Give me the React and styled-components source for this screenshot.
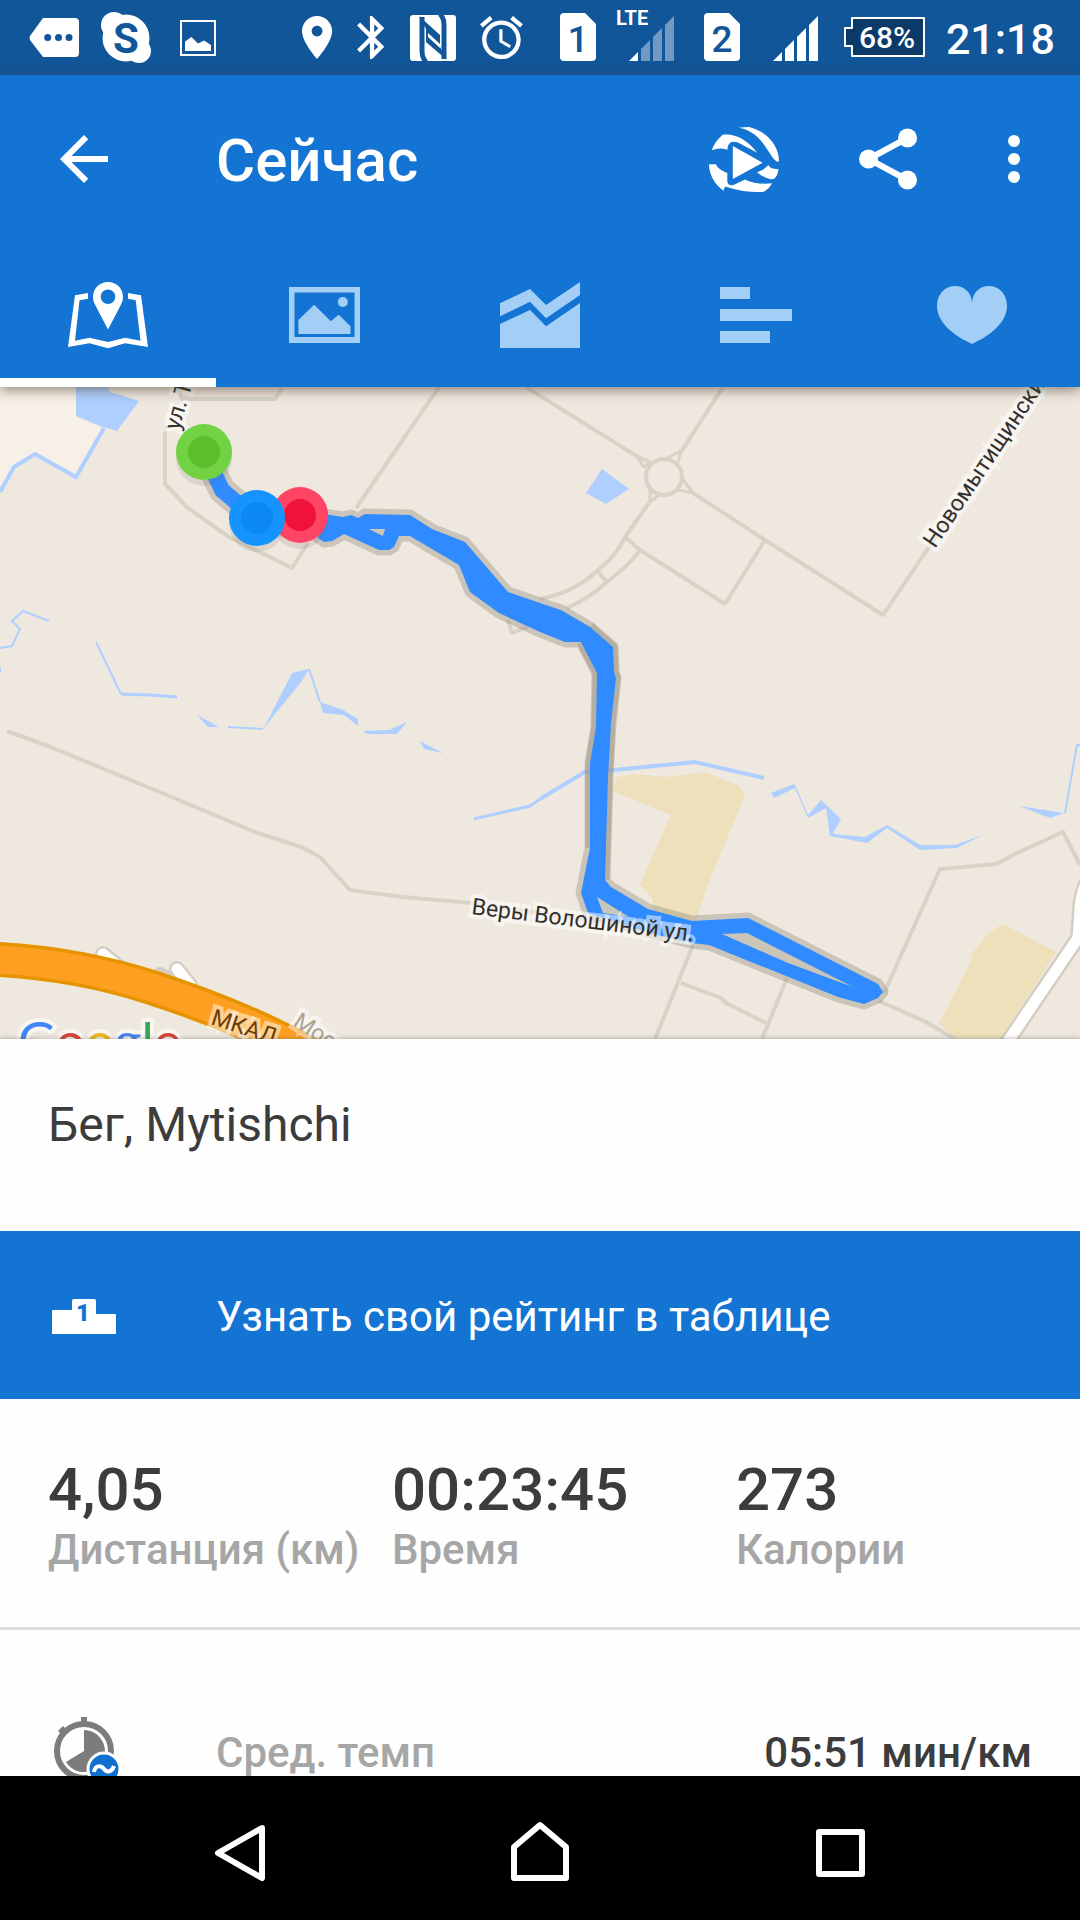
import { useState } from "react";
import styled, { createGlobalStyle } from "styled-components";

const GlobalStyle = createGlobalStyle`
  * {
    box-sizing: border-box;
  }

  body {
    margin: 0;
    background: #fefefe;
    font-family: Roboto, "Noto Sans", sans-serif;
  }

  button {
    border: none;
    padding: 0;
    background: none;
    color: inherit;
    font: inherit;
    cursor: pointer;
  }

  svg {
    display: block;
    flex-shrink: 0;
  }
`;

const Screen = styled.div`
  display: flex;
  flex-direction: column;
  height: 100vh;
`;

const StatusBar = styled.div`
  display: flex;
  align-items: center;
  justify-content: space-between;
  height: 75px;
  flex-shrink: 0;
  padding: 0 25px 0 29px;
  background: #12569a;
  color: #fff;
`;

const StatusGroup = styled.div`
  display: flex;
  align-items: center;
  gap: ${(props) => props.$gap}px;
`;

const Clock = styled.span`
  padding-top: 2px;
  font-size: 43px;
  line-height: 50px;
  font-weight: 500;
`;

const Header = styled.header`
  position: relative;
  z-index: 1;
  flex-shrink: 0;
  background: #1374d3;
  color: #fff;
  box-shadow: 0 3px 12px rgba(70, 60, 45, 0.6);
`;

const Toolbar = styled.div`
  display: flex;
  align-items: center;
  height: 168px;
  padding: 0 12px 0 0;
`;

const BackButton = styled.button`
  display: flex;
  align-items: center;
  width: 216px;
  height: 168px;
  padding-left: 48px;
`;

const Title = styled.h1`
  flex: 1;
  margin: 0;
  padding-top: 4px;
  font-size: 60px;
  line-height: 70px;
  font-weight: 500;
`;

const ActionButton = styled.button`
  display: flex;
  align-items: center;
  justify-content: center;
  width: ${(props) => (props.$narrow ? 108 : 144)}px;
  height: 144px;
`;

const Tabs = styled.nav`
  display: flex;
  height: 144px;
`;

const Tab = styled.button`
  display: flex;
  flex: 1;
  align-items: center;
  justify-content: center;
  color: ${(props) => (props.$active ? "#fff" : "#a3cff6")};
  box-shadow: ${(props) => (props.$active ? "inset 0 -9px 0 #fff" : "none")};
`;

const Content = styled.main`
  flex: 1;
  min-height: 0;
  overflow: hidden;
`;

const MapCanvas = styled.svg`
  width: 100%;
  height: 652px;
  background: #efe8df;
`;

const ActivityName = styled.h2`
  position: relative;
  margin: 0;
  padding: 58px 48px 78px;
  background: #fefefe;
  box-shadow: 0 0 5px rgba(90, 80, 60, 0.5);
  color: #3c3c3c;
  font-size: 48px;
  line-height: 56px;
  font-weight: 400;
`;

const RankingButton = styled.button`
  position: relative;
  display: flex;
  align-items: center;
  gap: 96px;
  width: 100%;
  height: 168px;
  padding: 2px 48px 0;
  background: #1374d3;
  color: #fff;
  font-size: 42px;
  line-height: 49px;
`;

const Stats = styled.section`
  display: grid;
  grid-template-columns: repeat(3, 1fr);
  padding: 56px 0 53px 48px;
  border-bottom: 3px solid #dedede;
`;

const StatValue = styled.div`
  color: #3c3c3c;
  font-size: 60px;
  line-height: 70px;
  font-weight: 500;
`;

const StatLabel = styled.div`
  color: #a6a6a6;
  font-size: 42px;
  line-height: 49px;
  font-weight: 500;
  white-space: nowrap;
`;

const DetailList = styled.section`
  padding-top: 48px;
`;

const DetailRow = styled.div`
  display: flex;
  align-items: center;
  gap: 96px;
  height: 148px;
  padding: 0 48px;
  font-size: 42px;
  line-height: 49px;
  font-weight: 500;
`;

const DetailLabel = styled.span`
  flex: 1;
  color: #a6a6a6;
`;

const DetailValue = styled.span`
  color: #3c3c3c;
`;

const NavBar = styled.footer`
  position: relative;
  display: flex;
  height: 144px;
  flex-shrink: 0;
  padding: 0 90px;
  background: #000;
  color: #fff;
`;

const NavButton = styled.button`
  display: flex;
  flex: 1;
  align-items: center;
  justify-content: center;
`;

/* Status bar icons */

const MoreNotificationsIcon = () => (
  <svg width="50" height="75" viewBox="0 0 50 75">
    <path
      d="M14 18H46Q50 18 50 22V53Q50 57 46 57H14L1 40Q0 38 1 36Z"
      fill="#fff"
    />
    <g fill="#12569a">
      <circle cx="18.7" cy="37.5" r="3.5" />
      <circle cx="29.5" cy="37.5" r="3.5" />
      <circle cx="40" cy="37.5" r="3.5" />
    </g>
  </svg>
);

const SkypeIcon = () => (
  <svg width="50" height="75" viewBox="0 0 50 75">
    <g fill="#fff">
      <circle cx="25" cy="38" r="23.5" />
      <circle cx="13" cy="25" r="13" />
      <circle cx="38" cy="51" r="12" />
    </g>
    <text
      x="25"
      y="53"
      textAnchor="middle"
      fontSize="42"
      fontWeight="700"
      fill="#12569a"
    >
      S
    </text>
  </svg>
);

const PictureIcon = () => (
  <svg width="50" height="75" viewBox="0 0 50 75">
    <rect
      x="8"
      y="21"
      width="34"
      height="34"
      fill="none"
      stroke="#fff"
      strokeWidth="2"
    />
    <path d="M12 51V41.5L18.5 37L25 43.5L31 40.5L38 45V51Z" fill="#fff" />
  </svg>
);

const LocationIcon = () => (
  <svg width="34" height="43" viewBox="5 2 15.8 20">
    <path
      fill="#fff"
      d="M12 2C8.13 2 5 5.13 5 9c0 5.25 7 13 7 13s7-7.75 7-13c0-3.87-3.13-7-7-7zm0 9.5c-1.38 0-2.5-1.12-2.5-2.5s1.12-2.5 2.5-2.5 2.5 1.12 2.5 2.5-1.12 2.5-2.5 2.5z"
    />
  </svg>
);

const BluetoothIcon = () => (
  <svg width="30" height="43" viewBox="4.5 2 14 20">
    <path
      fill="#fff"
      d="M17.71 7.71L12 2h-1v7.59L6.41 5 5 6.41 10.59 12 5 17.59 6.41 19 11 14.41V22h1l5.71-5.71-4.3-4.29 4.3-4.29zM13 5.83l1.88 1.88L13 9.59V5.83zm1.88 10.46L13 18.17v-3.76l1.88 1.88z"
    />
  </svg>
);

const NfcIcon = () => (
  <svg width="54" height="46" viewBox="-4 0 54 46">
    <rect width="46" height="46" rx="3" fill="#fff" />
    <g fill="none" stroke="#12569a" strokeWidth="5">
      <path d="M12 2V36Q12 43 16 47" />
      <path d="M34 44V10Q34 3 30 -1" />
    </g>
    <path d="M9 1L30 20V32L37 45L16 27V14Z" fill="#12569a" />
    <path d="M18 18L30 29V33L18 22Z" fill="#fff" />
  </svg>
);

const AlarmIcon = () => (
  <svg width="60" height="43" viewBox="2 1.9 28 20">
    <path
      fill="#fff"
      d="M22 5.72l-4.6-3.86-1.29 1.53 4.6 3.86L22 5.72zM7.88 3.39L6.6 1.86 2 5.71l1.29 1.53 4.59-3.85zM12.5 8H11v6l4.75 2.85.75-1.23-4-2.37V8zM12 4c-4.97 0-9 4.03-9 9s4.02 9 9 9 9-4.03 9-9-4.03-9-9-9zm0 16c-3.87 0-7-3.13-7-7s3.13-7 7-7 7 3.13 7 7-3.13 7-7 7z"
    />
  </svg>
);

const SimIcon = ({ slot }) => (
  <svg width="36" height="75" viewBox="0 0 36 75">
    <path
      d="M4 13H25L36 24V57Q36 61 32 61H4Q0 61 0 57V17Q0 13 4 13Z"
      fill="#fff"
    />
    <text
      x="18"
      y="52"
      textAnchor="middle"
      fontSize="37"
      fontWeight="500"
      fill="#12569a"
    >
      {slot}
    </text>
  </svg>
);

const SignalIcon = ({ label, weak }) => (
  <svg width={weak ? 68 : 64} height="75" viewBox={`0 0 ${weak ? 68 : 64} 75`}>
    {label && (
      <text x="0" y="25" fontSize="20" fontWeight="700" fill="#fff">
        {label}
      </text>
    )}
    <g transform="translate(13 16)" fill="#fff">
      <path d="M0 45L9 36V45Z" />
      <g opacity={weak ? 0.4 : 1}>
        <path d="M12 45V33L21 24V45Z" />
        <path d="M24 45V21L33 12V45Z" />
        <path d="M36 45V9L45 0V45Z" />
      </g>
    </g>
  </svg>
);

const BatteryIcon = ({ level }) => (
  <svg width="82" height="75" viewBox="0 0 82 75">
    <path
      d="M8 18H80V56H8V46H1V28H8Z"
      fill="#0b3a69"
      stroke="#fff"
      strokeWidth="2"
      strokeLinejoin="round"
    />
    <text
      x="43"
      y="48"
      textAnchor="middle"
      fontSize="30"
      fontWeight="500"
      fill="#fff"
    >
      {level}
    </text>
  </svg>
);

/* Toolbar icons */

const BackIcon = () => (
  <svg width="72" height="72" viewBox="0 0 24 24" fill="currentColor">
    <path d="M20 11H7.83l5.59-5.59L12 4l-8 8 8 8 1.41-1.41L7.83 13H20v-2z" />
  </svg>
);

const ReplayGlobeIcon = () => (
  <svg width="70" height="65" viewBox="0 0 70 65" fill="currentColor">
    <path d="M30 .8Q35 0 40 0C57 4 70 18 70 34Q68 36 66 33C59 27 53 5 30 .8Z" />
    <path d="M2.8 23.3Q5 15 13.8 7.7C25 6 38 12 48.2 25.7L29 15.5Q19 12 18.3 22.7Q10 20 2.8 23.3Z" />
    <path d="M23.8 19L53.7 35.7L23.8 52Z" />
    <path d="M0 37.3H7C8 41 13 44 18.3 46V54Q19 60 25 57.7L36 52.5C45 57 55 57 63 56.3Q60 62 55 64.7C40 66 28 63 16 59.5L14.5 63.7C5 57 0 47 0 37.3Z" />
    <path d="M48 45.3L54 42.7L59.5 38Q61 42.5 69.5 42Q69 48 66 51Q64 53 61 52Q55 51 48 45.3Z" />
  </svg>
);

const ShareIcon = () => (
  <svg width="58" height="62" viewBox="0 0 58 62" fill="currentColor">
    <path
      d="M48.5 10L9.5 31L48.5 52"
      fill="none"
      stroke="currentColor"
      strokeWidth="6"
    />
    <circle cx="9.5" cy="31" r="9.5" />
    <circle cx="48.5" cy="10" r="9.5" />
    <circle cx="48.5" cy="52" r="9.5" />
  </svg>
);

const MoreIcon = () => (
  <svg width="72" height="72" viewBox="0 0 24 24" fill="currentColor">
    <circle cx="12" cy="6" r="2" />
    <circle cx="12" cy="12" r="2" />
    <circle cx="12" cy="18" r="2" />
  </svg>
);

/* Tab icons */

const MapTabIcon = () => (
  <svg width="80" height="67" viewBox="0 0 80 67" fill="currentColor">
    <path d="M0 65L7 13.3L20 11V16.7L11.5 18.3L7 58.7L21.5 55.7L40 60L57 55.7L72.5 58.7L67.7 18.3L60 16.7V11L73 13.3L80 65L57 61.3L40 66.3L21.5 61.3Z" />
    <path
      fillRule="evenodd"
      d="M40 0C31.5 0 25 6.5 25 15C25 19 26.5 21.5 28 24.5L40 47.5L52 24.5C53.5 21.5 55 19 55 15C55 6.5 48.5 0 40 0ZM40 7.5A7.2 7.2 0 1 1 40 22A7.2 7.2 0 1 1 40 7.5Z"
    />
  </svg>
);

const PhotoTabIcon = () => (
  <svg width="71" height="56" viewBox="0 0 71 56" fill="currentColor">
    <path fillRule="evenodd" d="M0 0H71V56H0ZM5.5 5.5V50H65.5V5.5Z" />
    <path d="M9.4 47V33L25.2 17.7L41.8 34.3L49.7 27.7L61.5 39.3V47Z" />
    <circle cx="53.8" cy="15" r="5" />
  </svg>
);

const ChartTabIcon = () => (
  <svg width="80" height="66" viewBox="0 0 80 66" fill="currentColor">
    <path d="M0 21.3L30 7L46 23L80 0V13L46 36.3L30 19.7L0 34.3Z" />
    <path d="M0 42L30 28L46 44.3L80 21V66H0Z" />
  </svg>
);

const SplitsTabIcon = () => (
  <svg width="72" height="56" viewBox="0 0 72 56" fill="currentColor">
    <rect width="30" height="12" />
    <rect y="22" width="72" height="12" />
    <rect y="44" width="50" height="12" />
  </svg>
);

const HeartTabIcon = () => (
  <svg width="70" height="58" viewBox="0 0 70 58" fill="currentColor">
    <path d="M35 16C34 6 27 0 18 0C8 0 0 8 0 20C0 38 20 51 35 58C50 51 70 38 70 20C70 8 62 0 52 0C43 0 36 6 35 16Z" />
  </svg>
);

/* Content icons */

const PodiumIcon = () => (
  <svg width="72" height="72" viewBox="0 0 72 72">
    <path
      d="M4 54V31Q4 30 5 30H24V21Q24 19 26 19H46Q48 19 48 21V34H67Q68 34 68 35V54Z"
      fill="#fff"
    />
    <text
      x="35"
      y="41"
      textAnchor="middle"
      fontSize="24"
      fontWeight="900"
      fill="#1374d3"
    >
      1
    </text>
  </svg>
);

const AveragePaceIcon = () => (
  <svg width="72" height="72" viewBox="0 0 72 72">
    <circle
      cx="36"
      cy="35"
      r="27"
      fill="none"
      stroke="#7c7c7c"
      strokeWidth="6"
    />
    <g fill="#7c7c7c">
      <rect x="33" y="1" width="6" height="6" />
      <path d="M10 15L15 10L18 13L13 18Z" />
      <path d="M36 35V14A21 21 0 1 1 18 46Z" />
    </g>
    <circle cx="56" cy="53" r="16" fill="#1170cf" stroke="#fff" strokeWidth="3" />
    <path
      d="M46 56C47 49 53 49 56 53C59 57 64 56 66 50"
      fill="none"
      stroke="#fff"
      strokeWidth="4"
    />
  </svg>
);

/* Track outline with the three gaps where outbound and return paths part */
const trackPath =
  "M324 514L343 517L351 515L358 518L365 514L410 515L432 529L465 542L508 592L540 603L561 610L590 627L613 647L614 672L616 678L611 723L608 777L605 880L611 887L648 909L692 921L748 918L878 984L883 992L878 998L864 1004L838 997L709 945L691 943L650 933L588 913L581 893L590 848V763L596 727L597 673L581 642L565 642L540 632L499 613L470 592L459 565L410 536H399L394 547L389 550H379L344 534L332 541L324 542L318 538Z" +
  "M369 529L385 529L383 536Z" +
  "M597 897L629 917L603 913Z" +
  "M722 934L747 933L853 987L788 963Z";

const markers = [
  { x: 204, y: 452, outer: "#73d144", inner: "#5bbf2a" },
  { x: 300, y: 515, outer: "#ff4565", inner: "#f01238" },
  { x: 257, y: 518, outer: "#1593ff", inner: "#0b88f5" },
];

const RouteMap = () => (
  <MapCanvas
    viewBox="0 387 1080 652"
    preserveAspectRatio="xMidYMid slice"
    role="img"
    aria-label="Карта"
  >
    <path d="M0 387H76V417L102 428L75 477L35 454L14 467L0 492Z" fill="#f7f0e6" />
    <path d="M178 387H282L275 398H182Z" fill="#efe2d8" />

    {/* Fields */}
    <g fill="#ede0bb">
      <path d="M617 777L633 774L666 777L705 772L739 786L745 795L707 887L695 922L654 913L652 898L640 884L671 815L612 791Z" />
      <path d="M1003 924L1056 952L1000 1039H955L939 1023L972 960L971 955L988 933Z" />
    </g>

    {/* Minor roads */}
    <g fill="none" stroke="#d8d2c7" strokeWidth="4" strokeLinejoin="round">
      <path d="M178 387L182 399H275L283 387" />
      <path d="M165 425V484L188 508L229 537L292 568L308 543M356 508L439 387" />
      <path d="M526 387L638 457L650 462M723 387L681 452" />
      <circle cx="664" cy="477" r="18" />
      <path
        d="M636 456L644 467L651 462M667 458L681 451L678 462M681 477L693 493L678 490M650 487V502L659 495"
        strokeWidth="3"
      />
      <path d="M693 493L765 540L883 615L929 547L960 500" />
      <path d="M765 540L725 604L640 550L625 537" />
      <path d="M649 503L625 537Q617 555 597 571Q575 592 540 599" />
      <path d="M640 550Q630 565 607 582Q590 598 567 608M597 571L606 581" />
      <path d="M508 620L512 633L527 627" />
      <path d="M7 731L48 746L155 790L255 832L301 847L320 857L350 890L403 897L472 903L600 922" />
      <path d="M884 993L940 869L996 864L1019 852L1063 832L1080 865" />
      <path d="M879 1001L926 1022L955 1039M693 945L655 1039M787 978L762 1039" />
      <path d="M681 983L721 998L726 1003L766 1023" />
    </g>

    {/* Water */}
    <g fill="#aecfff">
      <path d="M76 387H108L110 392L139 401L117 431L103 427L76 416Z" />
      <path d="M602 469L629 489L606 504L586 493Z" />
      <path d="M197 715L219 727L208 727Z" />
      <path d="M263 729L268 720L292 673L309 669L301 682Z" />
      <path d="M320 702L343 710L358 719V726L344 715L323 713Z" />
      <path d="M363 731L389 730L407 722L397 734L367 734Z" />
      <path d="M420 741L443 753L424 749Z" />
      <path d="M771 793L794 784L796 787L808 815L821 800L841 819L833 834L865 837L887 825L920 845H955L983 835L957 848L920 850L887 828L867 843L830 836L826 808L808 818L795 788L774 798Z" />
      <path d="M1019 806L1064 813L1050 818Z" />
    </g>
    <g fill="none" stroke="#aecfff" strokeWidth="4">
      <path d="M104 428L76 477L35 454L14 467L0 492" />
      <path d="M540 799L585 772L614 770L695 762L764 778" />
      <path d="M474 819L530 806L540 799" strokeWidth="3" />
      <path d="M121 694L149 695L177 697" strokeWidth="3" />
      <path
        d="M0 648L12 646L20 629L12 621L23 611L49 621M96 642L121 694M228 727L263 729M309 669L320 702M1065 813L1077 745H1080M0 672V667"
        strokeWidth="2"
      />
    </g>

    {/* Bigger roads and the motorway */}
    <g fill="none" strokeLinecap="round">
      <path
        d="M1088 880Q1080 895 1080 912L1078 938L1002 1050M103 954L125 972M177 969L190 985M160 975L168 980"
        stroke="#d3cdc3"
        strokeWidth="16"
      />
      <path
        d="M1088 880Q1080 895 1080 912L1078 938L1002 1050M103 954L125 972M177 969L190 985"
        stroke="#fff"
        strokeWidth="11"
      />
      <path
        d="M-10 959Q75 963 150 987Q240 1016 310 1054"
        stroke="#e59400"
        strokeWidth="35"
      />
      <path
        d="M-10 959Q75 963 150 987Q240 1016 310 1054"
        stroke="#ff9f22"
        strokeWidth="28"
      />
    </g>

    {/* Recorded track */}
    <path
      d={trackPath}
      fill="none"
      stroke="#8f897b"
      strokeOpacity="0.38"
      strokeWidth="11"
      strokeLinejoin="round"
    />
    <path
      d="M590 627L613 647L614 672L616 678L611 723L608 777L605 880M590 848V763L596 727L597 673L581 642"
      fill="none"
      stroke="#8f897b"
      strokeOpacity="0.35"
      strokeWidth="9"
    />
    <path d={trackPath} fill="#2f8bff" fillRule="evenodd" />
    <path
      d="M204 452L222 490L257 520"
      fill="none"
      stroke="#cdc5bb"
      strokeWidth="27"
    />
    <path
      d="M204 452L222 490L257 520"
      fill="none"
      stroke="#2f8bff"
      strokeWidth="16"
    />

    {/* Street names */}
    <g
      fontSize="23"
      fill="#33302c"
      stroke="#fff"
      strokeOpacity="0.5"
      strokeWidth="8"
      paintOrder="stroke"
    >
      <text transform="translate(179 431) rotate(-74)">ул. Т</text>
      <text transform="translate(935 549) rotate(-56)">Новомытищинский</text>
      <text transform="translate(471 914) rotate(7)">Веры Волошиной ул.</text>
      <text transform="translate(210 1024) rotate(18)" fill="#6b3d05">
        МКАД
      </text>
      <text transform="translate(292 1025) rotate(33)" fill="#a9a48f">
        Москва
      </text>
    </g>

    <text
      x="18"
      y="1060"
      fontFamily="Lato, sans-serif"
      fontSize="52"
      stroke="#fff"
      strokeOpacity="0.6"
      strokeWidth="8"
      paintOrder="stroke"
    >
      <tspan fill="#4285f4">G</tspan>
      <tspan fill="#d8453a">o</tspan>
      <tspan fill="#efb91f">o</tspan>
      <tspan fill="#4285f4">g</tspan>
      <tspan fill="#34a853">l</tspan>
      <tspan fill="#d8453a">e</tspan>
    </text>

    {markers.map((marker) => (
      <g key={marker.outer}>
        <circle
          cx={marker.x}
          cy={marker.y + 6}
          r="28"
          fill="#6f6556"
          opacity="0.15"
        />
        <circle cx={marker.x} cy={marker.y} r="28" fill={marker.outer} />
        <circle cx={marker.x} cy={marker.y} r="16" fill={marker.inner} />
      </g>
    ))}
  </MapCanvas>
);

const tabs = [
  { id: "map", label: "Карта", Icon: MapTabIcon },
  { id: "photos", label: "Фото", Icon: PhotoTabIcon },
  { id: "chart", label: "График", Icon: ChartTabIcon },
  { id: "splits", label: "Отрезки", Icon: SplitsTabIcon },
  { id: "heart", label: "Пульс", Icon: HeartTabIcon },
];

const stats = [
  { value: "4,05", label: "Дистанция (км)" },
  { value: "00:23:45", label: "Время" },
  { value: "273", label: "Калории" },
];

export default function App() {
  const [activeTab, setActiveTab] = useState("map");

  return (
    <Screen>
      <GlobalStyle />

      <StatusBar>
        <StatusGroup $gap={22}>
          <MoreNotificationsIcon />
          <SkypeIcon />
          <PictureIcon />
        </StatusGroup>
        <StatusGroup $gap={20}>
          <LocationIcon />
          <BluetoothIcon />
          <NfcIcon />
          <AlarmIcon />
          <SimIcon slot="1" />
          <SignalIcon label="LTE" weak />
          <SimIcon slot="2" />
          <SignalIcon />
          <BatteryIcon level="68%" />
          <Clock>21:18</Clock>
        </StatusGroup>
      </StatusBar>

      <Header>
        <Toolbar>
          <BackButton aria-label="Назад">
            <BackIcon />
          </BackButton>
          <Title>Сейчас</Title>
          <ActionButton aria-label="Повтор">
            <ReplayGlobeIcon />
          </ActionButton>
          <ActionButton aria-label="Поделиться">
            <ShareIcon />
          </ActionButton>
          <ActionButton $narrow aria-label="Ещё">
            <MoreIcon />
          </ActionButton>
        </Toolbar>
        <Tabs>
          {tabs.map(({ id, label, Icon }) => (
            <Tab
              key={id}
              $active={activeTab === id}
              aria-label={label}
              onClick={() => setActiveTab(id)}
            >
              <Icon />
            </Tab>
          ))}
        </Tabs>
      </Header>

      <Content>
        <RouteMap />
        <ActivityName>Бег, Mytishchi</ActivityName>
        <RankingButton>
          <PodiumIcon />
          <span>Узнать свой рейтинг в таблице</span>
        </RankingButton>
        <Stats>
          {stats.map((stat) => (
            <div key={stat.label}>
              <StatValue>{stat.value}</StatValue>
              <StatLabel>{stat.label}</StatLabel>
            </div>
          ))}
        </Stats>
        <DetailList>
          <DetailRow>
            <AveragePaceIcon />
            <DetailLabel>Сред. темп</DetailLabel>
            <DetailValue>05:51 мин/км</DetailValue>
          </DetailRow>
        </DetailList>
      </Content>

      <NavBar>
        <NavButton aria-label="Назад">
          <svg width="72" height="72" viewBox="0 0 72 72">
            <path
              d="M58 16L14 41L58 66Z"
              fill="none"
              stroke="currentColor"
              strokeWidth="6"
              strokeLinejoin="round"
            />
          </svg>
        </NavButton>
        <NavButton aria-label="Домой">
          <svg width="72" height="72" viewBox="0 0 72 72">
            <path
              d="M36 13L62 35V66H10V35Z"
              fill="none"
              stroke="currentColor"
              strokeWidth="6"
              strokeLinejoin="round"
            />
          </svg>
        </NavButton>
        <NavButton aria-label="Недавние">
          <svg width="72" height="72" viewBox="0 0 72 72">
            <rect
              x="15"
              y="20"
              width="43"
              height="42"
              fill="none"
              stroke="currentColor"
              strokeWidth="6"
              strokeLinejoin="round"
            />
          </svg>
        </NavButton>
      </NavBar>
    </Screen>
  );
}
